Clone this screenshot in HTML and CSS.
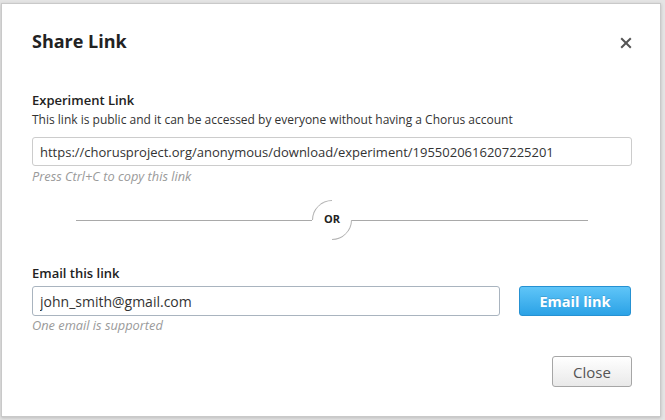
FILE: index.html
```html
<!DOCTYPE html>
<html lang="en">
<head>
<meta charset="utf-8">
<title>Share Link</title>
<link rel="stylesheet" href="styles.css">
</head>
<body>
<div class="modal">
  <div class="modal-header">
    <h2 class="modal-title">Share Link</h2>
    <span class="close-x" aria-label="Close">
      <svg width="12" height="12" viewBox="0 0 12 12"><path d="M1.2 1.2 L10.8 10.8 M10.8 1.2 L1.2 10.8" stroke="#555" stroke-width="2" stroke-linecap="butt"/></svg>
    </span>
  </div>
  <div class="section first">
    <div class="label">Experiment Link</div>
    <div class="desc">This link is public and it can be accessed by everyone without having a Chorus account</div>
    <input class="field url" type="text" value="https://chorusproject.org/anonymous/download/experiment/1955020616207225201" readonly>
    <div class="help">Press Ctrl+C to copy this link</div>
  </div>
  <div class="divider">
    <span class="line"></span>
    <span class="or"><span class="or-text">OR</span></span>
    <span class="line"></span>
  </div>
  <div class="section email">
    <div class="label">Email this link</div>
    <div class="email-row">
      <input class="field email-input" type="text" value="john_smith@gmail.com">
      <button class="btn-primary" type="button">Email link</button>
    </div>
    <div class="help tight">One email is supported</div>
  </div>
  <div class="footer">
    <button class="btn-default" type="button">Close</button>
  </div>
</div>
</body>
</html>
```

FILE: styles.css
```css
html, body {
  margin: 0;
  padding: 0;
}
body {
  background: #e4e4e4;
  padding: 3px 0 0 1px;
  font-family: "Open Sans", "DejaVu Sans", sans-serif;
  color: #222;
  height: 420px;
  box-sizing: border-box;
  overflow: hidden;
}
.modal {
  width: 660px;
  height: 414px;
  box-sizing: border-box;
  background: #fff;
  border: 1px solid #c9c9c9;
  box-shadow: 0 1px 3px rgba(0,0,0,0.18);
  padding: 25px 28px 0 30px;
  display: flex;
  flex-direction: column;
}
.modal-header {
  display: flex;
  justify-content: space-between;
  align-items: center;
  height: 24px;
}
.modal-title {
  margin: 0;
  font-size: 18px;
  font-weight: 700;
  line-height: 24px;
  color: #222;
}
.close-x {
  display: flex;
  width: 12px;
  height: 12px;
  margin-top: 3px;
}
.section.first {
  margin-top: 38px;
}
.label {
  font-size: 13px;
  font-weight: 600;
  line-height: 18px;
  color: #222;
}
.desc {
  margin-top: 2px;
  font-size: 12px;
  line-height: 17px;
  color: #333;
}
.field {
  display: block;
  box-sizing: border-box;
  margin: 0;
  border: 1px solid #cccccc;
  border-radius: 3px;
  padding: 0 7px;
  font-family: "Open Sans", "DejaVu Sans", sans-serif;
  color: #333;
  background: #fff;
  outline: none;
}
.url {
  margin-top: 9px;
  width: 100%;
  height: 29px;
  font-size: 13px;
}
.help {
  margin-top: 2px;
  font-size: 12.8px;
  line-height: 17px;
  font-style: italic;
  color: #9a9a9a;
}
.help.tight {
  margin-top: 1px;
}
.divider {
  margin-top: 15px;
  height: 40px;
  padding: 0 44px;
  display: flex;
  align-items: center;
}
.line {
  flex: 1;
  height: 1px;
  background: #a9a9a9;
}
.or {
  position: relative;
  width: 40px;
  height: 40px;
  display: flex;
  align-items: center;
  justify-content: center;
}
.or::before {
  content: "";
  position: absolute;
  inset: 0;
  box-sizing: border-box;
  border: 1px solid transparent;
  border-top-color: #b4b4b4;
  border-bottom-color: #b4b4b4;
  border-radius: 50%;
  transform: rotate(-45deg);
}
.or-text {
  font-size: 11px;
  font-weight: 700;
  color: #222;
  line-height: 12px;
  margin-top: -3px;
}
.section.email {
  margin-top: 24px;
}
.email-row {
  margin-top: 4px;
  display: flex;
  gap: 19px;
}
.email-input {
  width: 468px;
  height: 30px;
  font-size: 14px;
  border-color: #a9b4bf;
}
.btn-primary {
  width: 112px;
  height: 30px;
  margin: 0;
  border: 1px solid #2591d2;
  border-radius: 3px;
  background: linear-gradient(#5fc5f8, #2ba2e6);
  color: #fff;
  font-family: "Open Sans", "DejaVu Sans", sans-serif;
  font-size: 14.5px;
  font-weight: 700;
  text-shadow: 0 -1px 0 rgba(0,0,0,0.12);
  padding: 0;
}
.footer {
  margin-top: 22px;
  display: flex;
  justify-content: flex-end;
}
.btn-default {
  width: 80px;
  height: 31px;
  margin: 0;
  padding: 0;
  border: 1px solid #a6a6a6;
  border-radius: 3px;
  background: linear-gradient(#ffffff, #e9e9e9);
  color: #555;
  font-family: "Open Sans", "DejaVu Sans", sans-serif;
  font-size: 15px;
}
```
